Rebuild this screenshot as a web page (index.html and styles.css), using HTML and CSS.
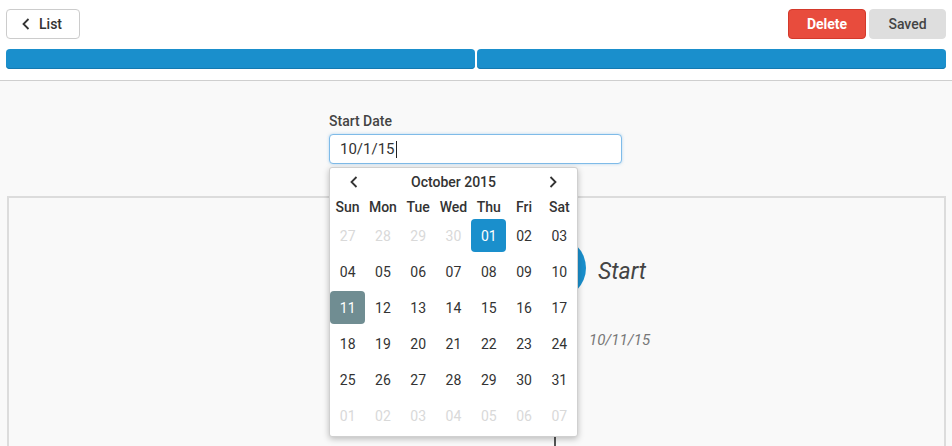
FILE: index.html
```html
<!DOCTYPE html>
<html>
<head>
<meta charset="utf-8">
<link rel="stylesheet" href="styles.css">
</head>
<body>
<header class="topbar">
  <div class="actions">
    <button class="btn btn-back">
      <svg class="chev" width="8" height="12" viewBox="0 0 8 12"><path d="M6.5 1 L1.5 6 L6.5 11" fill="none" stroke="#333" stroke-width="1.8"/></svg>
      <span>List</span>
    </button>
    <div class="right-actions">
      <button class="btn btn-delete">Delete</button>
      <button class="btn btn-saved">Saved</button>
    </div>
  </div>
  <div class="bars">
    <div class="bar"></div>
    <div class="bar"></div>
  </div>
</header>

<main class="main">
  <div class="form">
    <label class="label">Start Date</label>
    <div class="input"><span>10/1/15</span><span class="caret"></span></div>

    <div class="datepicker">
      <div class="dp-head">
        <svg width="8" height="12" viewBox="0 0 8 12"><path d="M6.5 1 L1.5 6 L6.5 11" fill="none" stroke="#333" stroke-width="1.8"/></svg>
        <span class="dp-title">October 2015</span>
        <svg width="8" height="12" viewBox="0 0 8 12"><path d="M1.5 1 L6.5 6 L1.5 11" fill="none" stroke="#333" stroke-width="1.8"/></svg>
      </div>
      <div class="dp-weekdays">
        <span>Sun</span><span>Mon</span><span>Tue</span><span>Wed</span><span>Thu</span><span>Fri</span><span>Sat</span>
      </div>
      <div class="dp-days">
        <span class="muted">27</span><span class="muted">28</span><span class="muted">29</span><span class="muted">30</span><span class="active">01</span><span>02</span><span>03</span>
        <span>04</span><span>05</span><span>06</span><span>07</span><span>08</span><span>09</span><span>10</span>
        <span class="selected">11</span><span>12</span><span>13</span><span>14</span><span>15</span><span>16</span><span>17</span>
        <span>18</span><span>19</span><span>20</span><span>21</span><span>22</span><span>23</span><span>24</span>
        <span>25</span><span>26</span><span>27</span><span>28</span><span>29</span><span>30</span><span>31</span>
        <span class="muted">01</span><span class="muted">02</span><span class="muted">03</span><span class="muted">04</span><span class="muted">05</span><span class="muted">06</span><span class="muted">07</span>
      </div>
    </div>
  </div>

  <section class="panel">
    <div class="timeline-item">
      <div class="track">
        <div class="circle"></div>
        <div class="line"></div>
      </div>
      <div class="content">
        <div class="title">Start</div>
        <div class="date">10/11/15</div>
      </div>
    </div>
  </section>
</main>
</body>
</html>
```

FILE: styles.css
```css
html, body {
  margin: 0;
  padding: 0;
  height: 446px;
  overflow: hidden;
}
body {
  font-family: Roboto, "Liberation Sans", sans-serif;
  background: #f9f9f9;
  color: #333;
}

.topbar {
  background: #fff;
  border-bottom: 1px solid #cfcfcf;
  padding: 9px 6px 11px 6px;
  height: 60px;
}
.actions {
  display: flex;
  justify-content: space-between;
  height: 30px;
}
.right-actions {
  display: flex;
  gap: 3px;
}
.btn {
  font-family: Roboto, "Liberation Sans", sans-serif;
  font-size: 14px;
  height: 30px;
  border-radius: 4px;
  box-sizing: border-box;
  padding: 0;
  display: flex;
  align-items: center;
  justify-content: center;
  cursor: pointer;
}
.btn-back {
  width: 74px;
  background: #fff;
  border: 1px solid #ccc;
  color: #333;
  font-weight: 500;
  gap: 9px;
  padding-right: 2px;
}
.btn-delete {
  width: 78px;
  background: #e84c3d;
  border: 1px solid #d3392b;
  color: #fff;
  font-weight: 700;
}
.btn-saved {
  width: 77px;
  background: #dedede;
  border: 1px solid #dedede;
  color: #444;
  font-weight: 500;
}

.bars {
  display: flex;
  gap: 2px;
  margin-top: 10px;
}
.bar {
  flex: 1;
  height: 20px;
  background: #1a8fcc;
  border-radius: 4px;
  box-shadow: inset 0 -1px 0 #1479b0;
}

.main {
  position: relative;
}
.form {
  position: relative;
  width: 293px;
  margin-left: calc(50% - 147px);
  padding-top: 33px;
  z-index: 2;
}
.label {
  display: block;
  font-size: 14px;
  font-weight: 500;
  color: #444;
  line-height: 15px;
  margin-bottom: 5px;
}
.input {
  height: 30px;
  box-sizing: border-box;
  border: 1px solid #7fbbe8;
  border-radius: 4px;
  background: #fff;
  box-shadow: 0 0 3px rgba(102, 175, 233, 0.5);
  padding-left: 10px;
  font-size: 15px;
  color: #333;
  display: flex;
  align-items: center;
}
.caret {
  display: inline-block;
  width: 1px;
  height: 17px;
  background: #222;
  margin-left: 1px;
}

.datepicker {
  position: absolute;
  top: 86px;
  left: 0;
  width: 249px;
  box-sizing: border-box;
  background: #fff;
  border: 1px solid #d0d0d0;
  border-radius: 3px;
  box-shadow: 0 2px 6px rgba(0, 0, 0, 0.25);
  padding: 0 0 4px 0;
}
.dp-head {
  height: 28px;
  display: flex;
  align-items: center;
  justify-content: space-between;
  padding: 0 20px 0 20px;
}
.dp-title {
  font-size: 14px;
  font-weight: 500;
  color: #333;
}
.dp-weekdays {
  display: grid;
  grid-template-columns: repeat(7, 1fr);
  height: 22px;
  align-items: center;
  font-size: 14px;
  font-weight: 500;
  color: #333;
  text-align: center;
  margin-bottom: 1px;
}
.dp-days {
  display: grid;
  grid-template-columns: repeat(7, 1fr);
  grid-auto-rows: 33px;
  row-gap: 3px;
  font-size: 14px;
  color: #333;
}
.dp-days span {
  display: flex;
  align-items: center;
  justify-content: center;
  border-radius: 4px;
}
.dp-days .muted {
  color: #d9d9d9;
}
.dp-days .active {
  background: #1a8fcc;
  color: #fff;
}
.dp-days .selected {
  background: #708d92;
  color: #fff;
}

.panel {
  margin: 32px 6px 0 7px;
  border: 2px solid #dcdcdc;
  border-bottom: none;
  height: 260px;
  background: #f9f9f9;
}
.timeline-item {
  display: flex;
  margin-left: 515px;
  padding-top: 39px;
  height: 221px;
}
.track {
  width: 62px;
  display: flex;
  flex-direction: column;
  align-items: center;
}
.circle {
  width: 62px;
  height: 62px;
  border-radius: 50%;
  background: #1a8fcc;
  flex: none;
}
.line {
  width: 2px;
  flex: 1;
  background: #555;
}
.content {
  display: flex;
  flex-direction: column;
}
.title {
  font-size: 23px;
  font-style: italic;
  color: #444;
  margin-left: 12px;
  height: 62px;
  line-height: 62px;
  padding-top: 4px;
}
.date {
  font-size: 15px;
  font-style: italic;
  color: #777;
  margin-left: 3px;
  margin-top: 28px;
  line-height: 18px;
}
```
